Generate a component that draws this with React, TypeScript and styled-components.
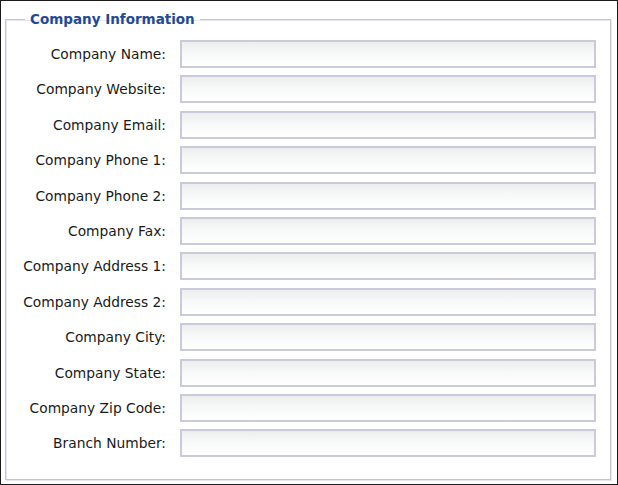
import React from "react";
import styled, { createGlobalStyle } from "styled-components";

const Global = createGlobalStyle`
  html, body { margin: 0; padding: 0; background: #ffffff; }
  * { box-sizing: border-box; }
`;

const Frame = styled.div`
  width: 618px;
  height: 485px;
  border: 1px solid #1a1a1a;
  background: #ffffff;
  padding: 10px 6px 6px 4px;
  font-family: "DejaVu Sans", Tahoma, sans-serif;
`;

const Fieldset = styled.fieldset`
  margin: 0;
  height: 469px;
  border: 1px solid #c4c4d4;
  box-shadow: inset 1px 1px 0 #e6e6ee, 1px 1px 0 #e6e6ee;
  padding: 13px 13px 0 0;
`;

const Legend = styled.legend`
  margin-left: 19px;
  padding: 0 5px;
  font-size: 13.5px;
  font-weight: bold;
  color: #1f4b96;
`;

const Grid = styled.div`
  display: grid;
  grid-template-columns: 160px 416px;
  column-gap: 14px;
  row-gap: 7.4px;
  align-items: center;
`;

const Label = styled.label`
  text-align: right;
  font-size: 13.8px;
  color: #1a1a1a;
  white-space: nowrap;
`;

const Input = styled.input`
  height: 28px;
  width: 416px;
  border: 2px solid #cacadb;
  background: linear-gradient(to bottom, #eceeee 0%, #f7f8f8 45%, #ffffff 100%);
  font-family: inherit;
  font-size: 13px;
  padding: 0 4px;
  outline: none;
`;

const fields = [
  "Company Name:",
  "Company Website:",
  "Company Email:",
  "Company Phone 1:",
  "Company Phone 2:",
  "Company Fax:",
  "Company Address 1:",
  "Company Address 2:",
  "Company City:",
  "Company State:",
  "Company Zip Code:",
  "Branch Number:",
];

export default function App() {
  return (
    <>
      <Global />
      <Frame>
        <Fieldset>
          <Legend>Company Information</Legend>
          <Grid>
            {fields.map((f) => (
              <React.Fragment key={f}>
                <Label>{f}</Label>
                <Input type="text" />
              </React.Fragment>
            ))}
          </Grid>
        </Fieldset>
      </Frame>
    </>
  );
}
